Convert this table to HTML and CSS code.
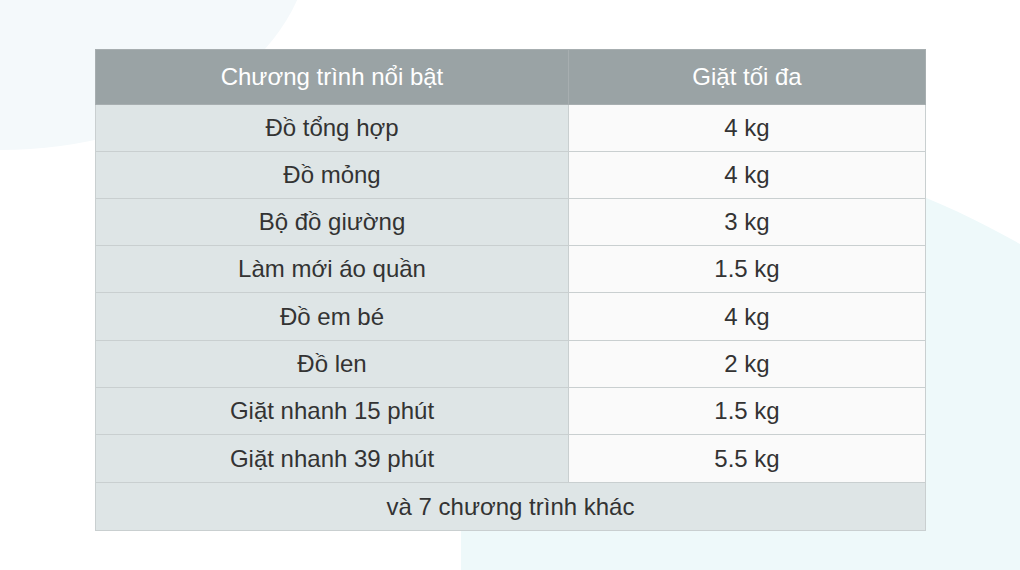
FILE: index.html
```html
<!DOCTYPE html>
<html lang="vi">
<head>
<meta charset="utf-8">
<link rel="stylesheet" href="styles.css">
</head>
<body>
<svg class="bg" width="1020" height="570" viewBox="0 0 1020 570">
  <ellipse cx="0" cy="-60" rx="310" ry="210" fill="#f4f9fb"/>
  <path d="M461 570 L461 330 C461 170 600 120 760 148 C850 165 940 198 1020 244 L1020 570 Z" fill="#eef9fa"/>
</svg>
<div class="wrap">
<table class="spec">
  <thead>
    <tr><th class="c1">Chương trình nổi bật</th><th class="c2">Giặt tối đa</th></tr>
  </thead>
  <tbody>
    <tr><td class="c1">Đồ tổng hợp</td><td class="c2">4 kg</td></tr>
    <tr><td class="c1">Đồ mỏng</td><td class="c2">4 kg</td></tr>
    <tr><td class="c1">Bộ đồ giường</td><td class="c2">3 kg</td></tr>
    <tr><td class="c1">Làm mới áo quần</td><td class="c2">1.5 kg</td></tr>
    <tr class="tall"><td class="c1">Đồ em bé</td><td class="c2">4 kg</td></tr>
    <tr><td class="c1">Đồ len</td><td class="c2">2 kg</td></tr>
    <tr><td class="c1">Giặt nhanh 15 phút</td><td class="c2">1.5 kg</td></tr>
    <tr class="tall"><td class="c1">Giặt nhanh 39 phút</td><td class="c2">5.5 kg</td></tr>
    <tr class="tall"><td class="c1 foot" colspan="2">và 7 chương trình khác</td></tr>
  </tbody>
</table>
</div>
</body>
</html>
```
FILE: styles.css
```css
html, body {
  margin: 0;
  padding: 0;
  background: #ffffff;
  width: 1020px;
  height: 570px;
  overflow: hidden;
}
body {
  position: relative;
  font-family: "Liberation Sans", Arial, sans-serif;
  color: #333333;
}
.bg {
  position: absolute;
  left: 0;
  top: 0;
  z-index: 0;
}
.wrap {
  position: relative;
  z-index: 1;
  padding: 49px 0 0 95px;
}
.spec {
  border-collapse: collapse;
  width: 831px;
  table-layout: fixed;
  font-size: 24px;
  line-height: 1;
}
.spec th, .spec td {
  border: 1px solid #c9cfd0;
  text-align: center;
  padding: 0;
}
.spec th {
  height: 54px;
  background: #9aa3a5;
  color: #ffffff;
  font-weight: normal;
  border-color: #a7aeb0;
}
.spec td {
  height: 46px;
}
.spec tr.tall td {
  height: 47px;
}
.spec .c1 { width: 472px; }
.spec td.c1 { background: #dee5e6; }
.spec td.c2 { background: #fafafa; }
.spec td.foot { background: #dee5e6; }
```
